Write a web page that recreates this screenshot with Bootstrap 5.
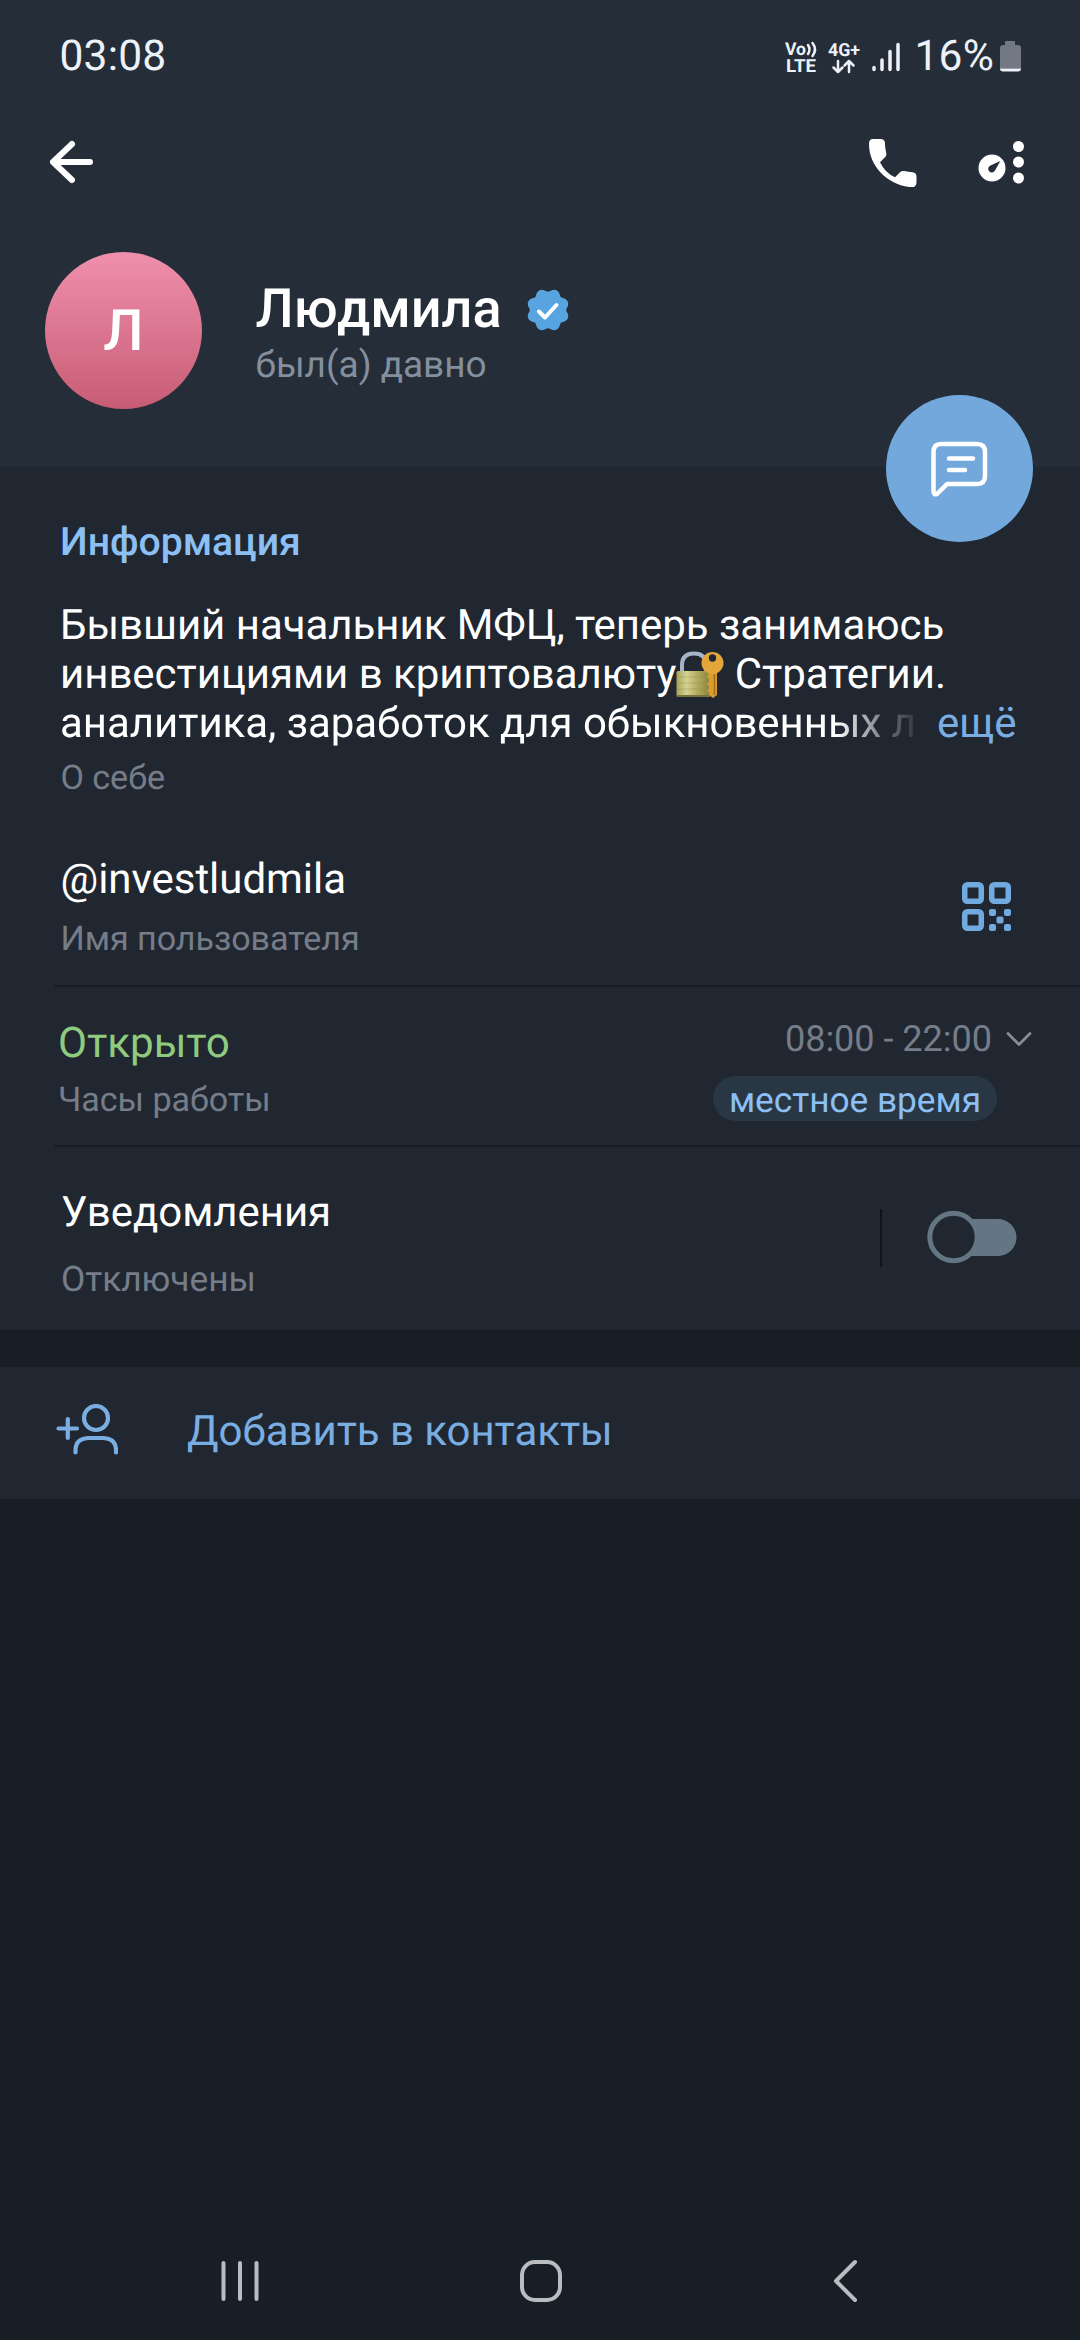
<!DOCTYPE html>
<html lang="ru" data-bs-theme="dark">
<head>
<meta charset="utf-8">
<meta name="viewport" content="width=device-width, initial-scale=1">
<title>Людмила</title>
<link rel="stylesheet" href="https://cdn.jsdelivr.net/npm/bootstrap@5.3.0/dist/css/bootstrap.min.css">
<style>
  body { font-family: Roboto, "Noto Sans", sans-serif; background: #181e26; color: #fff; font-size: 42px; line-height: 50px; letter-spacing: -.04px; text-rendering: geometricPrecision; }
  svg { display: block; flex: none; }
  .screen { width: 1080px; height: 2340px; overflow: hidden; }
  .profile-head { background: #242d38; height: 467px; }
  .status-bar { height: 112px; padding: 2px 59px 0 59.5px; color: #edf1f8; }
  .clock-text { font-size: 42.5px; letter-spacing: .2px; }
  .toolbar-row { height: 100px; padding: 0 54.5px 0 48px; }
  .identity { padding: 40px 0 0 45px; gap: 53.5px; }
  .avatar { width: 157px; height: 157px; background: linear-gradient(#f090ad, #c75c74); font-size: 57px; font-weight: 500; }
  .identity-text { padding-top: 28px; }
  .name-text { font-size: 54px; font-weight: 500; line-height: 60px; }
  .seen-text { font-size: 37px; color: #848f9d; line-height: 51px; }
  .fab { width: 147px; height: 147px; background: #73a8dc; top: 395px; right: 47px; }
  .surface { background: #202731; }
  .info-panel { height: 863px; }
  .section-title { font-size: 39.2px; font-weight: 500; color: #8cc0f5; padding: 50px 0 0 60px; }
  .bio { line-height: 49px; padding: 34px 0 0 60px; }
  .bio-fade { width: 873px; -webkit-mask-image: linear-gradient(90deg, #000 775px, rgba(0,0,0,.5) 815px, rgba(0,0,0,.14) 848px, transparent 870px); mask-image: linear-gradient(90deg, #000 775px, rgba(0,0,0,.5) 815px, rgba(0,0,0,.14) 848px, transparent 870px); }
  .accent { color: #7aaee2; }
  .caption-text { font-size: 34.1px; line-height: 40px; color: #767d88; }
  .bio-caption { margin: 10px 0 0 60.5px; }
  .user-row { height: 187px; padding: 57px 69.5px 0 60.5px; }
  .rule { height: 2px; background: #171d27; margin-left: 54px; }
  .hours-row { height: 158px; padding: 32px 48px 0 58px; }
  .open-text { font-size: 42.2px; color: #8fca7f; }
  .hours-text { font-size: 36.1px; color: #767d88; }
  .zone-pill { background: #293644; color: #8cc0f5; font-size: 35.3px; line-height: 48px; height: 45px; padding: 0 16px; margin-right: 35px; }
  .notify-row { height: 183px; padding: 41px 63px 0 61px; }
  .notify-row .caption-text { font-size: 35.3px; }
  .v-rule { width: 2px; height: 58px; background: #0e141d; }
  .contact-row { height: 132px; margin-top: 37px; padding: 0 56px 7px; gap: 69px; }
  .nav-row { height: 118px; padding: 0 221px; }
  .home-key { margin-right: 10px; }
</style>
</head>
<body>
<main class="screen d-flex flex-column">
  <header class="profile-head position-relative">
    <div class="status-bar d-flex align-items-center justify-content-between">
      <span class="clock-text">03:08</span>
      <div class="d-flex align-items-center">
        <svg width="116" height="40" viewBox="0 0 116 40" fill="none" stroke="#edf1f8" stroke-linecap="round" font-family="Roboto, sans-serif">
          <g fill="#edf1f8" stroke="none" font-weight="700">
            <text x="0" y="18" font-size="17.5" textLength="21" lengthAdjust="spacingAndGlyphs">Vo</text>
            <text x="1" y="35" font-size="18" textLength="30" lengthAdjust="spacingAndGlyphs">LTE</text>
            <text x="43" y="18.5" font-size="18" textLength="32" lengthAdjust="spacingAndGlyphs">4G+</text>
          </g>
          <path d="M23 8q3 4.500 0 9M27.500 6q5 6.500 0 13" stroke-width="2.500"/>
          <path d="M53 24v11M48.500 30.500 53 35l4.500-4.500M64 35V24M59.500 28.500 64 24l4.500 4.500" stroke-width="2.500" stroke-linejoin="round"/>
          <path d="M89 30.500v2M97 23v9.500M105 14.500V32.500M113 7.500V32.500" stroke-width="3.500"/>
        </svg>
        <span class="clock-text" style="margin-left:13.5px">16%</span>
        <svg width="21" height="40" viewBox="215 0 21 40" style="margin-left:6px">
          <path d="M220 4h10v4h3q3 0 3 3v20.500h-21v-20.500q0-3 3-3h2z" fill="#737984"/>
          <path d="M215 31.500h21q0 3-3 3h-15q-3 0-3-3z" fill="#edf1f8"/>
        </svg>
      </div>
    </div>
    <div class="toolbar-row d-flex align-items-center justify-content-between">
      <svg width="48" height="48" viewBox="0 0 48 48" fill="none" stroke="#fff" stroke-width="6" stroke-linecap="round" stroke-linejoin="round"><path d="M42 24H5M24 6 5 24l19 18"/></svg>
      <svg width="160" height="50" viewBox="0 0 160 50" fill="#fff">
        <path d="M7 2h7.500q4.500 0 4.500 4.500 0 5 1.200 9.500.6 2.500-1.200 4.300l-5 5q5 10.500 15 15l5-5q1.800-1.800 4.300-1.200 4.200 1 8.200 1.200 4 .3 4 4.500v6q0 4.500-4.500 4.500C22 48.500 3 29.500 3 7q0-5 4-5z"/>
        <circle cx="126" cy="31" r="13.500"/>
        <path d="m134.300 24-5.300 9.500a3.600 3.600 0 1 1-4.500-5z" fill="#242d38"/>
        <circle cx="152.500" cy="9.500" r="5.500"/><circle cx="152.500" cy="25" r="5.500"/><circle cx="152.500" cy="41" r="5.500"/>
      </svg>
    </div>
    <div class="identity d-flex">
      <div class="avatar rounded-circle d-flex align-items-center justify-content-center">Л</div>
      <div class="identity-text">
        <div class="d-flex align-items-center">
          <span class="name-text">Людмила</span>
          <svg width="46" height="46" viewBox="-23 -23 46 46" style="margin-left:23px">
            <path id="seal" fill="#58a4e0" stroke="#58a4e0" stroke-width="4" stroke-linejoin="round"/>
            <path d="M-9 1.500-3 7.500 8.500-5" fill="none" stroke="#fff" stroke-width="4" stroke-linecap="round" stroke-linejoin="round"/>
          </svg>
        </div>
        <div class="seen-text">был(а) давно</div>
      </div>
    </div>
    <div class="fab rounded-circle position-absolute d-flex align-items-center justify-content-center">
      <svg width="60" height="60" viewBox="0 0 60 60" fill="none" stroke="#fff" stroke-width="4.500" stroke-linecap="round" stroke-linejoin="round">
        <path d="M11 5h36q8 0 8 8v24q0 8-8 8H17L7.500 54.500Q3.500 57 3.500 52V13q0-8 7.500-8z"/>
        <path d="M19 19.500h24M19 31h16"/>
      </svg>
    </div>
  </header>

  <section class="surface info-panel">
    <div class="section-title">Информация</div>
    <div class="bio text-nowrap">
      <div>Бывший начальник МФЦ, теперь занимаюсь</div>
      <div class="d-flex"><span>инвестициями в криптовалюту</span>
        <svg width="48" height="49" viewBox="0 0 48 49">
          <defs>
            <linearGradient id="brass"><stop offset="0" stop-color="#a5a35b"/><stop offset=".3" stop-color="#d5d390"/><stop offset=".6" stop-color="#b3ad61"/><stop offset="1" stop-color="#89803b"/></linearGradient>
          </defs>
          <path d="M6 22V15q0-11.500 12-11.500t12 11.500v7" fill="none" stroke="#a3b4c8" stroke-width="4"/>
          <rect x=".5" y="21" width="34" height="26" rx="1.500" fill="url(#brass)"/>
          <path d="M1 27h33M1 33h33M1 39h33" stroke="#96924c" stroke-width=".8" opacity=".6"/>
          <path d="M1 46h33" stroke="#77753e" stroke-width="2"/>
          <path d="M33 23h8v22l-4 3-4-3v-3l-2-1 2-2v-3l-2-2 2-2v-3l-2-2z" fill="#d99c2f"/>
          <path d="M38.500 24v21" stroke="#a66b19" stroke-width="1.500"/>
          <circle cx="36.500" cy="13" r="11" fill="#e2a63a"/><circle cx="36.500" cy="8" r="3.700" fill="#202731"/>
        </svg>
        <span>&nbsp;Стратегии.</span></div>
      <div class="d-flex"><span class="bio-fade">аналитика, заработок для обыкновенных л</span><span class="accent ms-1">ещё</span></div>
    </div>
    <div class="caption-text bio-caption">О себе</div>

    <div class="user-row d-flex justify-content-between">
      <div>
        <div>@investludmila</div>
        <div class="caption-text" style="margin-top:14px">Имя пользователя</div>
      </div>
      <svg width="49" height="49" viewBox="0 0 49 49" style="margin-top:27px" fill="#70aadf">
        <g fill="none" stroke="#70aadf" stroke-width="5.500"><rect x="2.750" y="2.750" width="16.500" height="16.500" rx="2.500"/><rect x="29.750" y="2.750" width="16.500" height="16.500" rx="2.500"/><rect x="2.750" y="29.750" width="16.500" height="16.500" rx="2.500"/></g>
        <rect x="27" y="27" width="7" height="7" rx="2"/><rect x="42" y="27" width="7" height="7" rx="2"/><rect x="34.500" y="34.500" width="7" height="7" rx="2"/><rect x="27" y="42" width="7" height="7" rx="2"/><rect x="42" y="42" width="7" height="7" rx="2"/>
      </svg>
    </div>
    <div class="rule"></div>

    <div class="hours-row d-flex justify-content-between">
      <div>
        <div class="open-text">Открыто</div>
        <div class="caption-text" style="margin-top:11px">Часы работы</div>
      </div>
      <div class="d-flex flex-column align-items-end">
        <div class="d-flex align-items-center hours-text" style="margin-top:-5px">08:00 - 22:00
          <svg width="26" height="18" viewBox="0 0 26 18" style="margin-left:14px" fill="none" stroke="#868d97" stroke-width="2.800" stroke-linecap="round" stroke-linejoin="round"><path d="M2 3.500 13 14.500 24 3.500"/></svg>
        </div>
        <div class="zone-pill rounded-pill" style="margin-top:12px">местное время</div>
      </div>
    </div>
    <div class="rule"></div>

    <div class="notify-row d-flex justify-content-between">
      <div>
        <div>Уведомления</div>
        <div class="caption-text" style="margin-top:21px">Отключены</div>
      </div>
      <div class="d-flex align-items-start" style="gap:45px">
        <div class="v-rule" style="margin-top:21px"></div>
        <svg width="90" height="54" viewBox="0 0 90 54" style="margin-top:22px">
          <rect x="20" y="9" width="69.500" height="37" rx="18.500" fill="#647684"/>
          <circle cx="26.500" cy="27" r="23.700" fill="#202731" stroke="#647684" stroke-width="5"/>
        </svg>
      </div>
    </div>
  </section>

  <section class="surface contact-row d-flex align-items-center accent">
    <svg width="62" height="52" viewBox="0 0 62 52" fill="none" stroke="#7aaee2" stroke-width="4.200" stroke-linecap="round" stroke-linejoin="round">
      <circle cx="40" cy="14" r="12"/><path d="M2.500 24.500h18.500M11.800 15v19M19.500 48.500v-2q0-12.500 14-12.500h12.500q14 0 14 12.500v2"/>
    </svg>
    <span class="pt-1">Добавить в контакты</span>
  </section>

  <nav class="nav-row mt-auto d-flex align-items-center justify-content-between">
    <svg width="38" height="44" viewBox="0 0 38 44" stroke="#b9bdc2" stroke-width="4" stroke-linecap="round"><path d="M2.500 4v36M19 4v36M35.500 4v36"/></svg>
    <svg class="home-key" width="44" height="44" viewBox="0 0 44 44" fill="none" stroke="#b9bdc2" stroke-width="4"><rect x="3" y="3" width="38" height="38" rx="13"/></svg>
    <svg width="26" height="44" viewBox="0 0 26 44" fill="none" stroke="#b9bdc2" stroke-width="4" stroke-linecap="round" stroke-linejoin="round"><path d="M22 3 3 22l19 19"/></svg>
  </nav>
</main>
<script>
  // Scalloped verification badge: eight lobes around the centre
  const pts = [];
  for (let a = 0; a < 360; a += 5) {
    const t = a * Math.PI / 180, r = 17.800 + 1.700 * Math.cos(8 * (t - Math.PI / 8));
    pts.push((r * Math.cos(t)).toFixed(2) + ' ' + (r * Math.sin(t)).toFixed(2));
  }
  document.getElementById('seal').setAttribute('d', 'M' + pts.join('L') + 'Z');
</script>
<script src="https://cdn.jsdelivr.net/npm/bootstrap@5.3.0/dist/js/bootstrap.bundle.min.js"></script>
</body>
</html>
